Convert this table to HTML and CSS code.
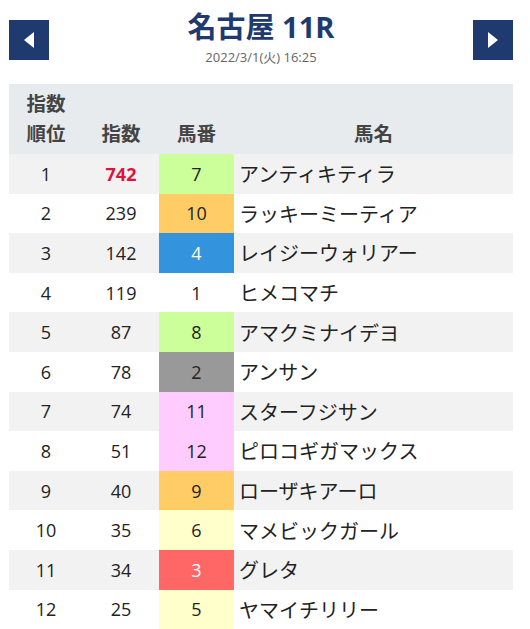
FILE: index.html
```html
<!DOCTYPE html>
<html>
  <head>
    <meta charset="utf-8">
    <title>名古屋 11R</title>
    <link rel="stylesheet" href="styles.css">
  </head>
  <body>
    <div id="header">
      <a class="nav" href="#"><svg width="12" height="16" viewBox="0 0 12 16"><polygon points="11,0 11,16 1,8" fill="#fff"/></svg></a>
      <div id="header_title">
        <h1>名古屋 11R</h1>
        <div class="date">2022/3/1(火) 16:25</div>
      </div>
      <a class="nav" href="#"><svg width="12" height="16" viewBox="0 0 12 16"><polygon points="1,0 1,16 11,8" fill="#fff"/></svg></a>
    </div>
    <table>
      <tr class="head">
        <th class="rank">指数<br>順位</th>
        <th class="score">指数</th>
        <th class="num">馬番</th>
        <th class="name">馬名</th>
      </tr>
      <tr>
        <td class="rank">1</td><td class="score top">742</td><td class="num w6">7</td><td class="name">アンティキティラ</td>
      </tr>
      <tr>
        <td class="rank">2</td><td class="score">239</td><td class="num w7">10</td><td class="name">ラッキーミーティア</td>
      </tr>
      <tr>
        <td class="rank">3</td><td class="score">142</td><td class="num w4">4</td><td class="name">レイジーウォリアー</td>
      </tr>
      <tr>
        <td class="rank">4</td><td class="score">119</td><td class="num w1">1</td><td class="name">ヒメコマチ</td>
      </tr>
      <tr>
        <td class="rank">5</td><td class="score">87</td><td class="num w6">8</td><td class="name">アマクミナイデヨ</td>
      </tr>
      <tr>
        <td class="rank">6</td><td class="score">78</td><td class="num w2">2</td><td class="name">アンサン</td>
      </tr>
      <tr>
        <td class="rank">7</td><td class="score">74</td><td class="num w8">11</td><td class="name">スターフジサン</td>
      </tr>
      <tr>
        <td class="rank">8</td><td class="score">51</td><td class="num w8">12</td><td class="name">ピロコギガマックス</td>
      </tr>
      <tr>
        <td class="rank">9</td><td class="score">40</td><td class="num w7">9</td><td class="name">ローザキアーロ</td>
      </tr>
      <tr>
        <td class="rank">10</td><td class="score">35</td><td class="num w5">6</td><td class="name">マメビックガール</td>
      </tr>
      <tr>
        <td class="rank">11</td><td class="score">34</td><td class="num w3">3</td><td class="name">グレタ</td>
      </tr>
      <tr>
        <td class="rank">12</td><td class="score">25</td><td class="num w5">5</td><td class="name">ヤマイチリリー</td>
      </tr>
    </table>
  </body>
</html>
```

FILE: styles.css
```css
body {
  margin: 0;
  padding: 11px 17px 0 9px;
  background-color: #FFFFFF;
  font-family: "Open Sans", "Noto Sans CJK JP", sans-serif;
  color: #222222;
}

#header {
  display: flex;
  justify-content: space-between;
  align-items: flex-start;
  height: 73px;
}

.nav {
  display: flex;
  align-items: center;
  justify-content: center;
  width: 40px;
  height: 40px;
  margin-top: 9px;
  background-color: #1F3A6F;
}

#header_title {
  text-align: center;
}

#header_title h1 {
  margin: 0;
  font-size: 29px;
  line-height: 32px;
  font-weight: bold;
  color: #1F3A6F;
}

#header_title .date {
  margin-top: 6px;
  font-size: 13px;
  line-height: 17px;
  color: #666666;
}

table {
  width: 504px;
  border-collapse: collapse;
  table-layout: fixed;
}

th {
  background-color: #E8EBEE;
  color: #444444;
  font-size: 19.5px;
  font-weight: bold;
  line-height: 30px;
  padding: 5px 0 5px 0;
  vertical-align: bottom;
}

td {
  height: 39.6px;
  padding: 0;
  font-size: 18px;
  text-align: center;
}

tr:nth-child(even) td {
  background-color: #F2F2F2;
}

.rank {
  width: 74px;
}

.score {
  width: 76px;
}

.num {
  width: 75px;
}

td.name {
  text-align: left;
  padding-left: 5px;
  font-size: 20px;
}

td.top {
  color: #DC143C;
  font-weight: bold;
}

tr td.w1 { background-color: #FFFFFF; }
tr td.w2 { background-color: #999999; }
tr td.w3 { background-color: #FF6666; color: #FFFFFF; }
tr td.w4 { background-color: #3393DD; color: #FFFFFF; }
tr td.w5 { background-color: #FFFFCC; }
tr td.w6 { background-color: #CCFF99; }
tr td.w7 { background-color: #FFCC66; }
tr td.w8 { background-color: #FFCCFF; }
```
